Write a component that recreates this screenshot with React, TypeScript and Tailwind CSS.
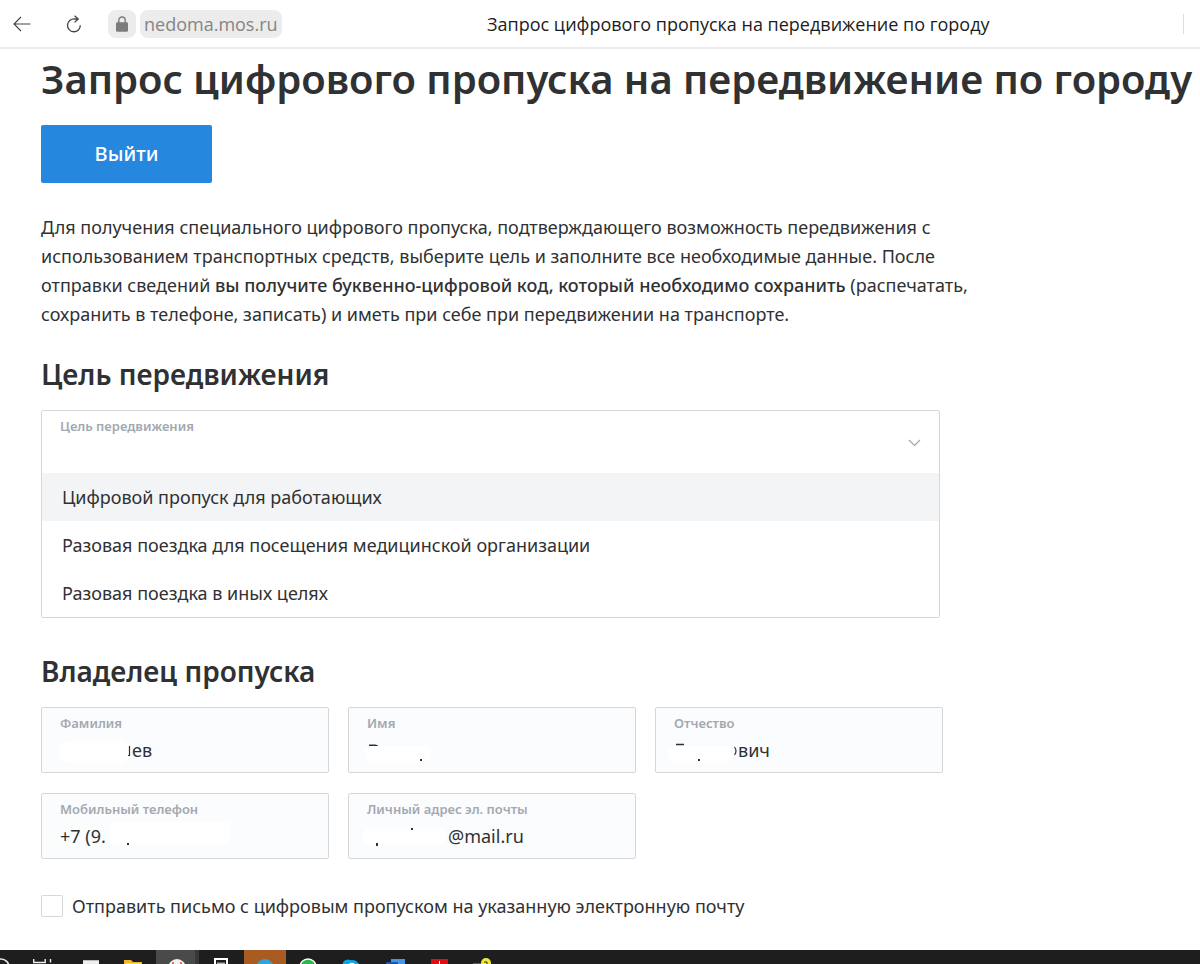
import { useState } from "react";
import type { ReactNode } from "react";

const purposes = [
  "Цифровой пропуск для работающих",
  "Разовая поездка для посещения медицинской организации",
  "Разовая поездка в иных целях",
];

function Toolbar() {
  return (
    <header className="flex h-[49px] items-center border-b-2 border-[#ededed] px-3 pr-4 font-['Open_Sans','Noto_Sans',sans-serif]">
      <button type="button" aria-label="Назад" className="flex w-5 justify-center text-[#444]">
        <svg width="18" height="16" viewBox="0 0 18 16" fill="none" stroke="currentColor" strokeWidth="1.1">
          <path d="M17.5 8H1.2M8 1 1 8l7 7" />
        </svg>
      </button>
      <button type="button" aria-label="Обновить" className="ml-8 flex w-5 justify-center text-[#444]">
        <svg width="16" height="18" viewBox="0 0 16 18" fill="none" stroke="currentColor" strokeWidth="1.3">
          <path d="M14.3 10.3A6.4 6.4 0 1 1 8.6 4H12M8.6.8 12.2 4 8.6 7.4" />
        </svg>
      </button>
      <div className="ml-6 flex h-7 gap-1">
        <span className="flex w-7 items-center justify-center rounded-lg bg-[#ececec] text-[#7c7c7c]">
          <svg width="12" height="16" viewBox="0 0 12 16">
            <path d="M2.8 7V4.2a3.2 3.2 0 0 1 6.4 0V7" fill="none" stroke="currentColor" strokeWidth="1.4" />
            <rect x="0" y="6.2" width="12" height="9.6" rx="1.4" fill="currentColor" />
          </svg>
        </span>
        <a href="#" className="flex items-center rounded-lg bg-[#ececec] px-1 pt-0.5 text-[18px] text-[#858585]">
          nedoma.mos.ru
        </a>
      </div>
      <div className="flex-1 pt-0.5 pl-3 text-center text-[18px] whitespace-nowrap text-[#1c1c1c]">
        Запрос цифрового пропуска на передвижение по городу
      </div>
      <span className="h-5 w-px bg-[#dedede]" />
    </header>
  );
}

type FieldProps = { id: string; label: string; value: string; inset: string; children: ReactNode };

function Field({ id, label, value, inset, children }: FieldProps) {
  return (
    <div className="relative h-[66px] rounded-xs border border-[#d5d7da] bg-[#fbfcfe] px-[18px] pt-[7px]">
      <label htmlFor={id} className="block text-[13px] leading-4 font-semibold text-[#a3a9b0]">
        {label}
      </label>
      <input
        id={id}
        defaultValue={value}
        className={`mt-[5px] block h-7 w-full bg-transparent text-[18px] outline-none ${inset}`}
      />
      <svg className="pointer-events-none absolute top-0 left-0" width="200" height="64" viewBox="0 0 200 64" fill="#fff">
        {children}
      </svg>
    </div>
  );
}

function PurposePicker() {
  const [active, setActive] = useState(0);
  return (
    <div className="rounded-xs border border-[#d5d7da]">
      <div className="relative flex h-[62px] items-start">
        <label htmlFor="purpose" className="pt-[7px] pl-[18px] text-[13px] leading-4 font-semibold text-[#a3a9b0]">
          Цель передвижения
        </label>
        <select id="purpose" defaultValue="" className="absolute inset-0 w-full appearance-none bg-transparent px-5 pt-5 outline-none">
          <option value="" />
          {purposes.map((p) => (
            <option key={p}>{p}</option>
          ))}
        </select>
        <svg className="pointer-events-none absolute top-7 right-[18px]" width="13" height="8" viewBox="0 0 13 8" fill="none" stroke="#a0a4a8" strokeWidth="1.2">
          <path d="m1 1 5.5 5.5L12 1" />
        </svg>
      </div>
      <ul>
        {purposes.map((p, i) => (
          <li key={p}>
            <button
              type="button"
              onMouseEnter={() => setActive(i)}
              className={`block h-12 w-full px-5 text-left text-[18px] ${i === active ? "bg-[#f3f4f6]" : "bg-white"}`}
            >
              {p}
            </button>
          </li>
        ))}
      </ul>
    </div>
  );
}

function Taskbar() {
  return (
    <footer className="mt-auto h-[14px] overflow-hidden bg-[#1e1e1e]">
      <svg width="520" height="40" viewBox="0 0 520 40" fill="none">
        <rect x="156" width="39" height="40" fill="#4a4a4a" />
        <rect x="195" width="4" height="40" fill="#383838" />
        <rect x="244" width="42" height="40" fill="#a85c22" />
        <circle cx="1" cy="17" r="8" stroke="#e8e8e8" strokeWidth="1.6" />
        <path d="M33.7 9v3.5h11.5V9M50.5 9v3.5M33.7 40V15.5h11.5V40M50.5 14v26" stroke="#eee" strokeWidth="1.4" />
        <path d="M83 10h16v14H83z" fill="#eee" />
        <path d="M83 10h16v1H83z" fill="#bbb" />
        <path d="M124 10h7l2 2h9v14h-18z" fill="#f2b62c" />
        <path d="M126 13h15v13h-15z" fill="#ffd35b" />
        <circle cx="177" cy="18" r="9" fill="#f4f0f0" />
        <circle cx="173" cy="13" r="1" fill="#c55" />
        <circle cx="181" cy="13" r="1" fill="#c55" />
        <path d="M215 9h12v22h-12z" stroke="#fff" strokeWidth="2" />
        <path d="M217 13.2h8" stroke="#fff" />
        <circle cx="265" cy="18" r="9" fill="#2ea3dc" />
        <circle cx="308" cy="17" r="8" fill="#29b84c" stroke="#fff" strokeWidth="1.5" />
        <circle cx="348" cy="15" r="5.5" fill="#0aa7e6" />
        <circle cx="352" cy="18" r="8" fill="#0aa7e6" />
        <path d="M349 15q3-3 6 0" stroke="#fff" strokeWidth="1.5" />
        <path d="M391 9h14v16h-14z" fill="#4594e6" />
        <rect x="386" y="12" width="12" height="14" rx="1" fill="#1b55b0" />
        <path d="M431 9h17v18h-17z" fill="#e00d14" />
        <path d="M439.5 11v12" stroke="#fff" />
        <path d="M473 14h9" stroke="#999" />
        <circle cx="486" cy="13" r="5" fill="#f2e936" />
        <path d="M484 12h3v3" stroke="#333" />
      </svg>
    </footer>
  );
}

export default function App() {
  return (
    <div className="flex min-h-screen flex-col bg-white font-['Noto_Sans',sans-serif] text-[#2f3133]">
      <Toolbar />
      <main className="px-[41px] pb-7">
        <h1 className="pt-0.5 pb-0.5 text-[40px] leading-[56px] font-semibold whitespace-nowrap">
          Запрос цифрового пропуска на передвижение по городу
        </h1>
        <button type="button" className="mt-4 h-[58px] w-[171px] rounded-xs bg-[#2588de] text-[20px] font-medium text-white">
          Выйти
        </button>
        <p className="mt-[30px] text-[18px] leading-[29px] whitespace-nowrap">
          Для получения специального цифрового пропуска, подтверждающего возможность передвижения с
          <br />
          использованием транспортных средств, выберите цель и заполните все необходимые данные. После
          <br />
          отправки сведений{" "}
          <strong className="font-medium">вы получите буквенно-цифровой код, который необходимо сохранить</strong>{" "}
          (распечатать,
          <br />
          сохранить в телефоне, записать) и иметь при себе при передвижении на транспорте.
        </p>
        <section className="max-w-[899px]">
          <h2 className="mt-[27px] mb-[18px] text-[28px] leading-[36px] font-semibold">Цель передвижения</h2>
          <PurposePicker />
        </section>
        <section className="max-w-[902px]">
          <h2 className="mt-[35px] mb-[18px] text-[28px] leading-[36px] font-semibold">Владелец пропуска</h2>
          <div className="grid grid-cols-3 gap-x-[19px] gap-y-5">
            <Field id="surname" label="Фамилия" value="ев" inset="pl-[72px]">
              <rect x="18" y="33" width="68" height="22" rx="6" />
              <path d="M87.5 38v9.5h-1.5" fill="none" stroke="#2f3133" strokeWidth="1.2" />
            </Field>
            <Field id="name" label="Имя" value="" inset="pl-0">
              <path d="M20 37.2h6q2 0 3 1.5" fill="none" stroke="#2f3133" strokeWidth="1.5" />
              <rect x="16" y="38" width="66" height="15" rx="6" />
              <rect x="71" y="51" width="2" height="2" fill="#2f3133" />
            </Field>
            <Field id="patronymic" label="Отчество" value="вич" inset="pl-[64px]">
              <path d="M20 36.5h8" stroke="#2f3133" strokeWidth="1.5" />
              <rect x="12" y="38" width="66" height="15" rx="6" />
              <path d="M78.500 39q3 4 0 8" fill="none" stroke="#2f3133" strokeWidth="1.2" />
              <rect x="42" y="51" width="2" height="2" fill="#2f3133" />
            </Field>
            <Field id="phone" label="Мобильный телефон" value="+7 (9." inset="pl-0">
              <rect x="68" y="28" width="120" height="22" rx="4" />
              <rect x="85" y="49" width="2" height="2" fill="#2f3133" />
            </Field>
            <Field id="email" label="Личный адрес эл. почты" value="@mail.ru" inset="pl-[81px]">
              <rect x="14" y="35" width="84" height="15" rx="6" />
              <rect x="62" y="34" width="2" height="2" fill="#2f3133" />
              <rect x="27" y="49" width="2" height="3" fill="#2f3133" />
            </Field>
          </div>
        </section>
        <div className="mt-[35px] flex items-center gap-[9px]">
          <input id="send" type="checkbox" className="size-[22px] appearance-none rounded-xs border border-[#d5d7da] bg-white checked:bg-[#2588de]" />
          <label htmlFor="send" className="text-[18px] leading-6">
            Отправить письмо с цифровым пропуском на указанную электронную почту
          </label>
        </div>
      </main>
      <Taskbar />
    </div>
  );
}
